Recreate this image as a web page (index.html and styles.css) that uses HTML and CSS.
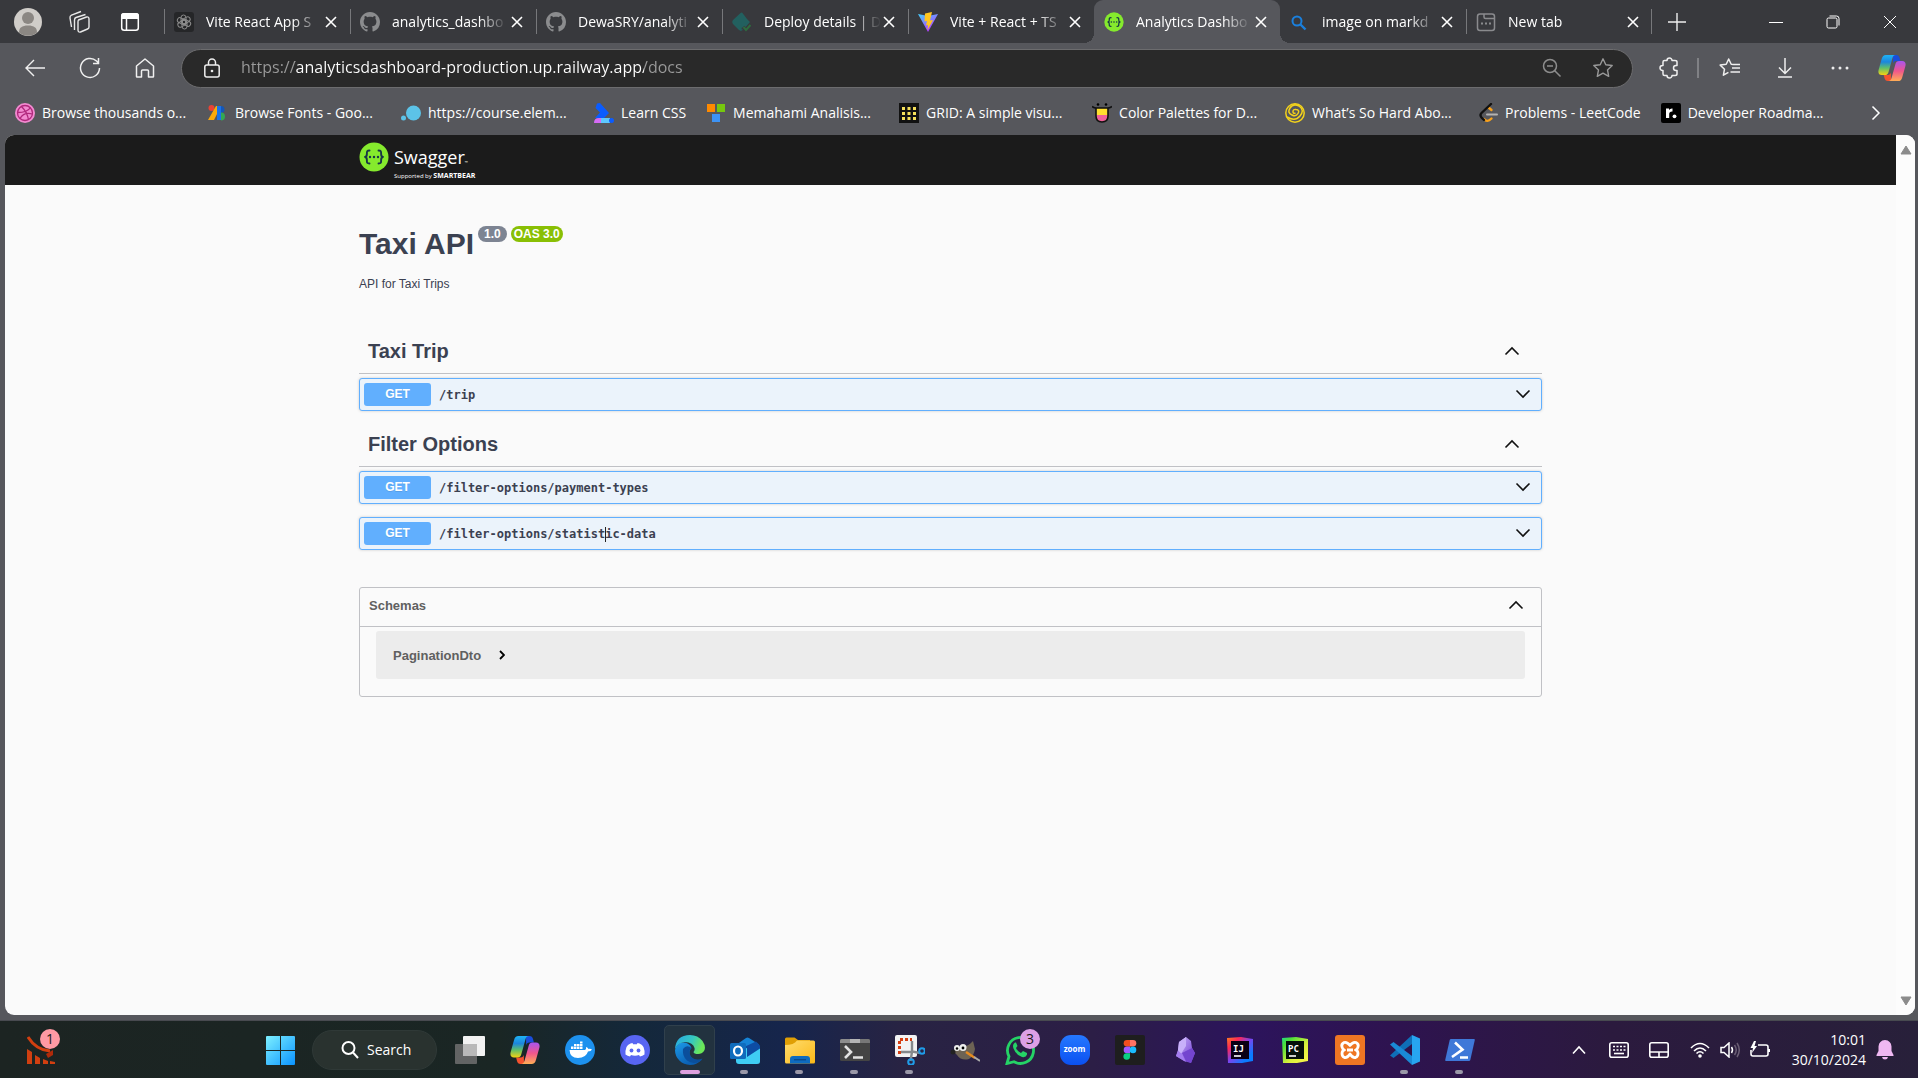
FILE: index.html
```html
<!DOCTYPE html>
<html lang="en">
<head>
<meta charset="utf-8">
<title>Analytics Dashboard</title>
<link rel="stylesheet" href="styles.css">
</head>
<body>
<svg class="defs" aria-hidden="true">
  <defs>
    <linearGradient id="cpA" x1="0" y1="0" x2="0" y2="1"><stop offset="0" stop-color="#1fb4f5"/><stop offset=".35" stop-color="#1c86dd"/><stop offset=".65" stop-color="#5fbf6a"/><stop offset="1" stop-color="#f4d312"/></linearGradient>
    <linearGradient id="cpB" x1="0" y1="0" x2="0" y2="1"><stop offset="0" stop-color="#a855f0"/><stop offset=".5" stop-color="#f0568c"/><stop offset="1" stop-color="#ffae55"/></linearGradient>
    <linearGradient id="win" x1="0" y1="0" x2="1" y2="1"><stop offset="0" stop-color="#7df0ff"/><stop offset="1" stop-color="#0a93ff"/></linearGradient>
    <linearGradient id="edgeA" x1="0" y1="0" x2="1" y2=".3"><stop offset="0" stop-color="#27a7e6"/><stop offset=".6" stop-color="#36c8c0"/><stop offset="1" stop-color="#6be858"/></linearGradient>
    <linearGradient id="edgeB" x1="0" y1="0" x2=".6" y2="1"><stop offset="0" stop-color="#1c9ae8"/><stop offset="1" stop-color="#0a5cb0"/></linearGradient>
    <linearGradient id="folder" x1="0" y1="0" x2="1" y2="1"><stop offset="0" stop-color="#ffdc6e"/><stop offset="1" stop-color="#fbb917"/></linearGradient>
    <linearGradient id="vite" x1="0" y1="0" x2=".6" y2="1"><stop offset="0" stop-color="#41d1ff"/><stop offset="1" stop-color="#bd34fe"/></linearGradient>
    <linearGradient id="zoomG" x1="0" y1="0" x2="0" y2="1"><stop offset="0" stop-color="#2578ff"/><stop offset="1" stop-color="#0b50f0"/></linearGradient>
    <linearGradient id="ijG" x1="0" y1="0" x2="1" y2="1"><stop offset="0" stop-color="#fc801d"/><stop offset=".25" stop-color="#fe2857"/><stop offset=".5" stop-color="#7a44ef"/><stop offset=".8" stop-color="#0a7cff"/></linearGradient>
    <linearGradient id="pcG" x1="0" y1="0" x2="1" y2="1"><stop offset="0" stop-color="#21d789"/><stop offset=".2" stop-color="#4be03a"/><stop offset=".6" stop-color="#d8f03c"/><stop offset="1" stop-color="#fcf84a"/></linearGradient>
    <linearGradient id="obs" x1="0" y1="0" x2="1" y2="1"><stop offset="0" stop-color="#cdb5fb"/><stop offset="1" stop-color="#6a35cf"/></linearGradient>
    <symbol id="close" viewBox="0 0 12 12"><path d="M1 1l10 10M11 1L1 11" fill="none" stroke="currentColor" stroke-width="1.6"/></symbol>
    <symbol id="up" viewBox="0 0 16 10"><path d="M1.500 8.500L8 2l6.500 6.500" fill="none" stroke="currentColor" stroke-width="1.600"/></symbol>
    <symbol id="down" viewBox="0 0 16 10"><path d="M1.500 1.500L8 8l6.500-6.500" fill="none" stroke="currentColor" stroke-width="1.600"/></symbol>
    <symbol id="github" viewBox="0 0 16 16"><path fill="#8b8c8e" d="M8 0C3.580 0 0 3.580 0 8c0 3.540 2.290 6.530 5.470 7.590.4.070.55-.17.55-.38 0-.19-.01-.82-.01-1.490-2.010.37-2.530-.49-2.690-.94-.09-.23-.48-.94-.82-1.130-.28-.15-.68-.52-.01-.53.63-.01 1.080.58 1.230.82.72 1.210 1.870.87 2.330.66.07-.52.28-.87.51-1.070-1.780-.2-3.640-.89-3.640-3.950 0-.87.31-1.590.82-2.150-.08-.2-.36-1.020.08-2.120 0 0 .67-.21 2.200.82.64-.18 1.320-.27 2-.27s1.360.09 2 .27c1.530-1.040 2.200-.82 2.200-.82.44 1.100.16 1.920.08 2.120.51.56.82 1.270.82 2.150 0 3.070-1.870 3.750-3.650 3.950.29.25.54.73.54 1.480 0 1.070-.01 1.930-.01 2.200 0 .21.15.46.55.38A8 8 0 0 0 16 8c0-4.420-3.580-8-8-8z"/></symbol>
    <symbol id="swag" viewBox="0 0 30 30"><circle cx="15" cy="15" r="14.500" fill="#85ea2d"/><g fill="none" stroke="#173647" stroke-width="1.900" stroke-linecap="round" stroke-linejoin="round"><path d="M10.500 8.500c-2.500 0-2.700 1-2.600 3 .1 2-.1 3.300-1.900 3.500 1.800.2 2 1.500 1.900 3.500-.1 2 .1 3 2.600 3M19.500 8.500c2.500 0 2.700 1 2.600 3-.1 2 .1 3.300 1.900 3.500-1.800.2-2 1.500-1.900 3.500.1 2-.1 3-2.600 3"/></g><g fill="#173647"><circle cx="11" cy="15" r="1.200"/><circle cx="15" cy="15" r="1.200"/><circle cx="19" cy="15" r="1.200"/></g></symbol>
    <symbol id="copilot" viewBox="0 0 30 30"><path d="M16 1h3.500c2 0 3 1.300 3.500 3l.9 3.500h-4.400c-2 0-2.800 1-3.300 2.700z" fill="#1a4ddb"/><path d="M14 29h-3.500c-2 0-3-1.300-3.500-3l-.9-3.500h4.400c2 0 2.800-1 3.300-2.700z" fill="#f4522f"/><path d="M8.500 1H19c-2 0-2.900 1.200-3.500 3.200l-4.200 15c-.6 2.200-1.700 3.300-4 3.300H4c-3 0-4.200-2.300-3.300-5.500L4 5.200C4.800 2.300 6 1 8.500 1z" fill="url(#cpA)"/><path d="M21.500 29H11c2 0 2.900-1.200 3.500-3.200l4.200-15c.6-2.200 1.700-3.300 4-3.300H26c3 0 4.200 2.300 3.300 5.500L26 24.800c-.8 2.900-2 4.200-4.500 4.200z" fill="url(#cpB)"/></symbol>
  </defs>
</svg>

<header class="browser">
  <div class="titlebar">
    <button class="tb-btn profile" aria-label="Profile"><svg width="28" height="28" viewBox="0 0 28 28"><circle cx="14" cy="14" r="14" fill="#d0cdc9"/><circle cx="14" cy="10" r="6" fill="#8b8783"/><path d="M5 24.500c0-5 3-7 9-7s9 2 9 7a14 14 0 0 1-18 0z" fill="#8b8783"/></svg></button>
    <button class="tb-btn" aria-label="Workspaces"><svg width="22" height="24" viewBox="0 0 22 24" fill="none" stroke="#e8e8e8" stroke-width="1.400" stroke-linejoin="round"><path d="M10.500 10l8-3q2.500-.5 2.500 2v8q0 1.500-1.500 2l-7 3q-2.500.5-2.500-2v-8q0-1.500.5-2z"/><path d="M6.500 20V10q0-2 1.500-2.500L17.500 4.500M3.500 17L2 8q-.3-2 1.500-2.800L13 1.500"/></svg></button>
    <button class="tb-btn" aria-label="Tab actions"><svg width="20" height="20" viewBox="0 0 20 20"><rect x="1.700" y="1.700" width="16.600" height="16.600" rx="2.500" fill="none" stroke="#fff" stroke-width="1.500"/><path d="M1 7V4q0-3 3-3h12q3 0 3 3v3z" fill="#fff"/><path d="M6.500 7v11" stroke="#fff" stroke-width="1.500"/></svg></button>
    <nav class="tabs" aria-label="Tabs">
      <div class="tab"><button class="tab-main"><svg viewBox="0 0 20 20"><rect width="20" height="20" rx="3" fill="#252628"/><g fill="none" stroke="#8c8c8c" stroke-width="1"><rect x="7" y="3" width="5" height="9" rx="2.500"/><rect x="7" y="3" width="5" height="9" rx="2.500" transform="rotate(60 10 10)"/><rect x="7" y="3" width="5" height="9" rx="2.500" transform="rotate(120 10 10)"/><rect x="7" y="3" width="5" height="9" rx="2.500" transform="rotate(180 10 10)"/><rect x="7" y="3" width="5" height="9" rx="2.500" transform="rotate(240 10 10)"/><rect x="7" y="3" width="5" height="9" rx="2.500" transform="rotate(300 10 10)"/></g></svg><span>Vite React App S</span></button><button class="tab-x" aria-label="Close tab"><svg><use href="#close"/></svg></button></div>
      <div class="tab"><button class="tab-main"><svg><use href="#github"/></svg><span>analytics_dashbo</span></button><button class="tab-x" aria-label="Close tab"><svg><use href="#close"/></svg></button></div>
      <div class="tab"><button class="tab-main"><svg><use href="#github"/></svg><span>DewaSRY/analyti</span></button><button class="tab-x" aria-label="Close tab"><svg><use href="#close"/></svg></button></div>
      <div class="tab"><button class="tab-main"><svg viewBox="0 0 20 20"><path d="M10 0.500l2 2.500 3 4 3 3-7 1-2 8-2-1-6-6q-1.500-2 0-4l7-6.500q1-1 2-1z" fill="#22605f"/><path d="M10 10h8l-6 7-3 2z" fill="#22605f"/><path d="M11 15l3 3.500 5-5" fill="none" stroke="#38393d" stroke-width="4"/><path d="M11.500 15l2.500 3 4.500-5" fill="none" stroke="#2e6b3e" stroke-width="2"/></svg><span>Deploy details | D</span></button><button class="tab-x" aria-label="Close tab"><svg><use href="#close"/></svg></button></div>
      <div class="tab"><button class="tab-main"><svg viewBox="0 0 20 20"><path d="M0 2l10 18L20 2l-10 2z" fill="url(#vite)"/><path d="M14 0L7 1.500 6.500 9.500l2.500-.5-1 4.500 2-.5-.5 5L15 8l-3 .5L14 0z" fill="#ffc61f"/></svg><span>Vite + React + TS</span></button><button class="tab-x" aria-label="Close tab"><svg><use href="#close"/></svg></button></div>
      <div class="tab active"><button class="tab-main"><svg><use href="#swag"/></svg><span>Analytics Dashbo</span></button><button class="tab-x" aria-label="Close tab"><svg><use href="#close"/></svg></button></div>
      <div class="tab"><button class="tab-main"><svg viewBox="0 0 20 20"><circle cx="7" cy="9" r="4.500" fill="none" stroke="#1a7fdc" stroke-width="2"/><path d="M10.500 12.500l5 5" stroke="#1a7fdc" stroke-width="2.400"/></svg><span>image on markd</span></button><button class="tab-x" aria-label="Close tab"><svg><use href="#close"/></svg></button></div>
      <div class="tab"><button class="tab-main"><svg viewBox="0 0 20 20" fill="none" stroke="#8a8b8e" stroke-width="1.500"><rect x="1.500" y="2" width="17" height="16.500" rx="2.500"/><path d="M8 2v3q0 1.500 1.500 1.500h9"/><path d="M5 11.500h2M9 11.500h2M13 11.500h2" stroke-width="2"/></svg><span>New tab</span></button><button class="tab-x" aria-label="Close tab"><svg><use href="#close"/></svg></button></div>
    </nav>
    <button class="new-tab" aria-label="New tab"><svg width="18" height="18" viewBox="0 0 18 18"><path d="M9 0v18M0 9h18" stroke="#eee" stroke-width="1.400"/></svg></button>
    <div class="win-ctl">
      <button aria-label="Minimize"><svg width="14" height="14" viewBox="0 0 14 14"><path d="M0 7.500h14" stroke="#fff"/></svg></button>
      <button aria-label="Restore"><svg width="14" height="14" viewBox="0 0 14 14" fill="none" stroke="#fff"><rect x="1" y="3" width="10" height="10" rx="1.500"/><path d="M3.500 1h7q2.500 0 2.500 2.500v7"/></svg></button>
      <button aria-label="Close"><svg width="14" height="14" viewBox="0 0 14 14"><path d="M1 1l12 12M13 1L1 13" stroke="#fff"/></svg></button>
    </div>
  </div>

  <div class="toolbar">
    <button class="nav-btn" aria-label="Back"><svg width="22" height="20" viewBox="0 0 22 20" fill="none" stroke="#f0f0f0" stroke-width="1.400"><path d="M21 10H2M10 2l-8 8 8 8"/></svg></button>
    <button class="nav-btn" aria-label="Refresh"><svg width="22" height="22" viewBox="0 0 22 22" fill="none" stroke="#f0f0f0" stroke-width="1.500"><path d="M20.500 11a9.500 9.500 0 1 1-3-7l2 2M19.500 1v5.500H14"/></svg></button>
    <button class="nav-btn" aria-label="Home"><svg width="20" height="20" viewBox="0 0 20 20" fill="none" stroke="#f0f0f0" stroke-width="1.500" stroke-linejoin="round"><path d="M1.500 8L10 1l8.500 7v10.500q0 .5-.5.500h-4.500v-6q0-1-1-1h-5q-1 0-1 1v6H2q-.5 0-.5-.5z"/></svg></button>
    <div class="omnibox">
      <svg width="16" height="20" viewBox="0 0 16 20" fill="none" stroke="#eee" stroke-width="1.500"><rect x=".8" y="7" width="14.400" height="12" rx="2"/><path d="M4.500 7V4.500a3.500 3.500 0 0 1 7 0V7"/><circle cx="8" cy="13" r=".6" fill="#eee"/></svg>
      <input class="url" type="text" aria-label="Address" value="https://analyticsdashboard-production.up.railway.app/docs">
      <button aria-label="Zoom out"><svg width="20" height="20" viewBox="0 0 20 20" fill="none" stroke="#8d8d8d" stroke-width="1.500"><circle cx="8" cy="8" r="6.500"/><path d="M12.500 12.500l6 6M5 8h6"/></svg></button>
      <button aria-label="Add to favorites"><svg width="22" height="22" viewBox="0 0 22 22" fill="none" stroke="#999" stroke-width="1.400" stroke-linejoin="round"><path d="M11 1.800l2.800 5.900 6.400.8-4.700 4.400 1.200 6.400-5.700-3.100-5.700 3.100 1.200-6.400L1.800 8.500l6.400-.8z"/></svg></button>
    </div>
    <div class="tools">
      <button class="ext" aria-label="Extensions"><svg width="20" height="22" viewBox="0 0 20 22" fill="none" stroke="#eee" stroke-width="1.500" stroke-linejoin="round"><path d="M4 5q0-1.500 1.500-1.500H8a2.500 2.500 0 0 1 5 0h3q2 0 2 1.500v3.500h-1a2.500 2.500 0 0 0 0 5h1V17q0 1.500-2 1.500h-3a2.500 2.500 0 0 1-5 0H5.500Q4 18.500 4 17v-3.500H3.500a2.500 2.500 0 0 1 0-5H4z"/></svg></button>
      <i class="bar"></i>
      <button aria-label="Favorites"><svg width="22" height="20" viewBox="0 0 22 20" fill="none" stroke="#eee" stroke-width="1.500" stroke-linejoin="round"><path d="M14.500 6.500l-2.300-.3L9.700 1 7.200 6.300l-6 .8 4.300 4.100-1.100 6 5-2.800M13 10h8M14 6.500h7M11.500 14h9.500"/></svg></button>
      <button aria-label="Downloads"><svg width="16" height="20" viewBox="0 0 16 20" fill="none" stroke="#eee" stroke-width="1.500"><path d="M8 0v15M2 9.500L8 15.500l6-6M1 19h14"/></svg></button>
      <button aria-label="Settings and more"><svg width="18" height="4" viewBox="0 0 18 4" fill="#eee"><circle cx="2" cy="2" r="1.500"/><circle cx="9" cy="2" r="1.500"/><circle cx="16" cy="2" r="1.500"/></svg></button>
      <button class="ext" aria-label="Copilot"><svg width="28" height="28"><use href="#copilot"/></svg></button>
    </div>
  </div>

  <nav class="bookmarks" aria-label="Favorites bar">
    <a href="#" class="long"><svg viewBox="0 0 20 20"><circle cx="10" cy="10" r="10" fill="#f28ad0"/><g fill="none" stroke="#b0287c" stroke-width="1.300"><circle cx="10" cy="10" r="7.500"/><path d="M6.500 3.500q6 6 7 13.500M2.500 9.500q10 0 13-5M5 15.500q4-7 12.500-4.500"/></g></svg><span>Browse thousands o...</span></a>
    <a href="#" class="long"><svg viewBox="0 0 20 20"><circle cx="3.500" cy="5" r="3" fill="#ea4335"/><path d="M8 3h5L6 17H0z" fill="#fbaa0a"/><path d="M9 3h4v14H9z" fill="#1a73e8"/><path d="M13 3a3.500 3.500 0 0 1 0 7z" fill="#1557b8"/><path d="M13 9.500a4 4 0 0 1 0 8z" fill="#34a853"/></svg><span>Browse Fonts - Goo...</span></a>
    <a href="#" class="long"><svg viewBox="0 0 20 20" fill="#5cc3e8"><circle cx="12.500" cy="10" r="7.500"/><circle cx="2.500" cy="15" r="2.500"/></svg><span>https://course.elem...</span></a>
    <a href="#"><svg viewBox="0 0 20 20"><path d="M3 .5l3-.5 9 10-5 5H1l5-5.500L1.500 5z" fill="#0a5cff"/><path d="M0 20q0-5 5-5h3v5z" fill="#d56bf5"/><path d="M7 15h9v5H7z" fill="#5dc8ff"/><circle cx="17.500" cy="17.500" r="2.500" fill="#0a5cff"/></svg><span>Learn CSS</span></a>
    <a href="#" class="long"><svg viewBox="0 0 20 20"><path d="M1 1h8v8H1z" fill="#ff8a00"/><path d="M11 1h8v8h-8z" fill="#76c80e"/><path d="M6 11h8v8H6z" fill="#3d93f5"/></svg><span>Memahami Analisis...</span></a>
    <a href="#" class="long"><svg viewBox="0 0 20 20"><path d="M0 0h20v20H0z" fill="#111"/><path d="M3 4h3v3H3zM8.500 4h3v3h-3zM14 4h3v3h-3zM3 9h3v3H3zM8.500 9h3v3h-3zM14 9h3v3h-3zM3 14h3v3H3zM8.500 14h3v3h-3zM14 14h3v3h-3z" fill="#f5e05a"/></svg><span>GRID: A simple visu...</span></a>
    <a href="#" class="long"><svg viewBox="0 0 20 20"><circle cx="6" cy="1.500" r="1.300"/><circle cx="14" cy="1.500" r="1.300"/><path d="M4 5h12v8q0 6-6 6t-6-6z" fill="#ffdf2e"/><path d="M4.500 12h11q0 7-5.500 7t-5.500-7z" fill="#f0609a"/><path d="M0 3.500q2 1.500 4 1.500h12q2 0 4-1.500M4 5v8q0 6 6 6t6-6V5" fill="none" stroke="#111" stroke-width="1.600"/></svg><span>Color Palettes for D...</span></a>
    <a href="#" class="long"><svg viewBox="0 0 20 20" fill="none" stroke="#f2d21c" stroke-width="1.500"><circle cx="10" cy="10" r="9.200"/><path d="M2 14q8 5 13-1t-1-10q-6-3-9 2t2 7q4 2 6-1.500T11 6.500q-3-.5-3 2t2.500 1.500"/></svg><span>What’s So Hard Abo...</span></a>
    <a href="#"><svg viewBox="0 0 20 20" fill="none" stroke-width="2.400" stroke-linecap="round"><path d="M13.500 7l-3-2.500M6 16q3 4 7.500-.5" stroke="#f9a11b"/><path d="M13 1L3.500 10q-2 2 0 4.500L6 17" stroke="#111"/><path d="M9 11.500h10" stroke="#b3b3b3" stroke-width="2"/></svg><span>Problems - LeetCode</span></a>
    <a href="#" class="long"><svg viewBox="0 0 20 20"><rect width="20" height="20" rx="2" fill="#000"/><path d="M5 15V5.500h3V7q1-1.700 3.500-1.500v3Q8.200 8.300 8.200 11v4z" fill="#fff"/><circle cx="13.500" cy="13.300" r="1.900" fill="#fff"/></svg><span>Developer Roadma...</span></a>
    <button class="more" aria-label="More favorites"><svg width="10" height="16" viewBox="0 0 10 16"><path d="M1.500 1.500L8 8l-6.500 6.500" fill="none" stroke="#fff" stroke-width="1.500"/></svg></button>
  </nav>
</header>

<div class="viewport">
  <main class="page">
    <div class="swagger-bar">
      <div class="wrap">
        <a href="#" class="logo"><svg width="30" height="30"><use href="#swag"/></svg><span class="logo-text"><span class="logo-name">Swagger<small>™</small></span><span class="logo-by">Supported by <b>SMARTBEAR</b></span></span></a>
      </div>
    </div>
    <div class="wrap">
      <section class="info">
        <h1>Taxi API</h1>
        <span class="pill version">1.0</span>
        <span class="pill oas">OAS 3.0</span>
      </section>
      <p class="desc">API for Taxi Trips</p>

      <section class="group">
        <h2><button>Taxi Trip<svg><use href="#up"/></svg></button></h2>
        <button class="op"><b class="verb">GET</b><code>/trip</code><svg><use href="#down"/></svg></button>
      </section>
      <section class="group">
        <h2><button>Filter Options<svg><use href="#up"/></svg></button></h2>
        <button class="op"><b class="verb">GET</b><code>/filter-options/payment-types</code><svg><use href="#down"/></svg></button>
        <button class="op"><b class="verb">GET</b><code>/filter-options/statist<i class="cursor"></i>ic-data</code><svg><use href="#down"/></svg></button>
      </section>

      <section class="schemas">
        <h3><button>Schemas<svg><use href="#up"/></svg></button></h3>
        <div class="models">
          <button class="model">PaginationDto<svg width="6" height="10" viewBox="0 0 6 10"><path d="M1 1l4 4-4 4" fill="none" stroke="#000" stroke-width="1.800"/></svg></button>
        </div>
      </section>
    </div>
  </main>
  <div class="scroll" aria-hidden="true">
    <svg width="12" height="10" viewBox="0 0 12 10"><path d="M6 1l5 8H1z" fill="#8b8b8b" stroke="#8b8b8b" stroke-linejoin="round"/></svg>
    <svg width="12" height="10" viewBox="0 0 12 10"><path d="M6 9l5-8H1z" fill="#8b8b8b" stroke="#8b8b8b" stroke-linejoin="round"/></svg>
  </div>
</div>

<footer class="taskbar">
  <button class="widget" aria-label="Widgets"><svg width="28" height="28" viewBox="0 0 28 28" fill="#d13f10"><path d="M0 13l5 3v12H0zM8 19l5 3v6H8zM16 23l5 2v3h-5zM23 25l5 1v2h-5z"/><path d="M1 1q8 13 22 14" fill="none" stroke="#d13f10" stroke-width="3"/><path d="M19 18l7-4v5l-5 3z" fill="#b02a0a"/></svg><span class="badge alert">1</span></button>
  <nav class="apps" aria-label="Taskbar">
    <button class="app" aria-label="Start"><svg viewBox="0 0 30 30" fill="url(#win)"><path d="M1 2q0-1 1-1h13v14H1zM16 1h13q1 0 1 1v13H16zM1 16h14v14H2q-1 0-1-1zM16 16h14v13q0 1-1 1H16z"/></svg></button>
    <button class="search"><svg width="18" height="18" viewBox="0 0 18 18" fill="none" stroke="#fff" stroke-width="2"><circle cx="7.500" cy="7" r="6"/><path d="M12 11.500l5 5.500"/></svg>Search</button>
    <button class="app" aria-label="Task view"><svg viewBox="0 0 30 30"><rect x="8" y="1" width="22" height="20" rx="1" fill="#f2f2f2"/><rect y="9" width="22" height="20" rx="1" fill="#707070" opacity=".85"/><path d="M8 9h14v12H8z" fill="#b9b9b9"/></svg></button>
    <button class="app" aria-label="Copilot"><svg><use href="#copilot"/></svg></button>
    <button class="app" aria-label="Docker"><svg viewBox="0 0 30 30"><circle cx="15" cy="15" r="15" fill="#1d91ee"/><path d="M4.500 15H20q1.500-.5 1-3 2 .5 2.500 2 2-.5 3.500.5-1 2-4 2-2 6.500-10 6.500Q5 23 4.500 15z" fill="#fff"/><path d="M6 11.500h2.500V14H6zM9 11.500h2.500V14H9zM12 11.500h2.500V14H12zM15 11.500h2.500V14H15zM9 9h2.500v2H9zM12 9h2.500v2H12zM15 9h2.500v2H15zM15 6.500h2.500v2H15z" fill="#fff"/></svg></button>
    <button class="app" aria-label="Discord"><svg viewBox="0 0 30 30"><circle cx="15" cy="15" r="15" fill="#5865f2"/><path d="M10.500 8.500L12.500 8l.6 1.200h3.800l.6-1.200 2 .5q3 1 4 3.500 1.500 4 1 7.500-2 1.500-4.500 2L19 20q-4 1.500-8 0l-1 1.500q-2.500-.5-4.500-2-.5-3.500 1-7.500 1-2.500 4-3.500z" fill="#fff"/><ellipse cx="11.500" cy="15.500" rx="1.900" ry="2.100" fill="#5865f2"/><ellipse cx="18.500" cy="15.500" rx="1.900" ry="2.100" fill="#5865f2"/></svg></button>
    <button class="app current" aria-label="Microsoft Edge"><svg viewBox="0 0 30 30"><path d="M0 15A15 15 0 0 0 15 30q7 0 11-5-5 1.500-9-1.500-3-3-2.500-7 .3-2 2-3.500-2-5.500-8.500-5.500Q2 7.500 0 15z" fill="url(#edgeB)"/><path d="M8 14q-1 7 4 11.500 5 4 12 1.500 2.500-1.500 3.500-3.500-4 1.500-8 .5-5-2-5-7 0-2.500 2-4-5-4-8.500 1z" fill="#0b4f9c"/><path d="M0 14Q1 0 15 0q8 0 12.500 6 4 6 1.500 10-2 3-6 3-4 0-4.500-2 1.500-1.500 1-4Q18 7.500 10 7 3 7.500 0 14z" fill="url(#edgeA)"/></svg></button>
    <button class="app open" aria-label="Outlook"><svg viewBox="0 0 30 30"><path d="M6 10l10-7q1.500-.8 3 0l10 6.500-4 5-14 3z" fill="#1583d6"/><path d="M14 12L26 6.500l4 4V14l-13 9-8-4z" fill="#0d4ca3"/><path d="M6 17l11-4v9l13-8.500v13q0 2.500-3 2.500H9q-3 0-3-3z" fill="#3fcdf4"/><rect y="8" width="16" height="16" rx="1.500" fill="#0f6cbd"/><ellipse cx="8" cy="16" rx="4" ry="4.500" fill="none" stroke="#fff" stroke-width="2.200"/></svg></button>
    <button class="app open" aria-label="File Explorer"><svg viewBox="0 0 30 30"><path d="M0 4q0-1.500 1.500-1.500h8L13 5h12v6H0z" fill="#e09f05"/><path d="M0 10q9 0 12-4.500h16.500Q30 5.500 30 7v20q0 1.500-1.500 1.500h-27Q0 28.500 0 27z" fill="url(#folder)"/><path d="M5 28.500V24q0-3 3-3h14q3 0 3 3v4.500z" fill="#0e6cbf"/><path d="M9 24.800h12" stroke="#083e78"/></svg></button>
    <button class="app open" aria-label="Terminal"><svg viewBox="0 0 30 30"><rect y="4" width="30" height="22" rx="1.500" fill="#444"/><path d="M0 8V5.500Q0 4 1.500 4H10v4z" fill="#8d8d8d"/><path d="M10 4h10v4H10z" fill="#b5b5b5"/><path d="M20 4h8.500Q30 4 30 5.500V8H20z" fill="#777"/><path d="M5 11l6 6-6 6M13 22.500h10" fill="none" stroke="#e2e2e2" stroke-width="2.600"/></svg></button>
    <button class="app open" aria-label="Snipping Tool"><svg viewBox="0 0 30 30"><rect width="22" height="22" rx="2" fill="#f3f3f3"/><path d="M4.500 19V4.500H17" fill="none" stroke="#d63f12" stroke-width="3" stroke-dasharray="3 2"/><path d="M17 6v10.500l8 1.500M6 17h11l-1.500 9" fill="none" stroke="#85898c" stroke-width="2.400"/><circle cx="27" cy="16" r="2.800" fill="none" stroke="#1f9ce8" stroke-width="2"/><circle cx="16" cy="27" r="2.800" fill="none" stroke="#1f9ce8" stroke-width="2"/></svg></button>
    <button class="app" aria-label="GIMP"><svg viewBox="0 0 30 30"><path d="M3 16q2-3 7-4 8 0 13-6l2 8q-1 7-6 10-8 2-12-4z" fill="#6d6354"/><circle cx="3" cy="17" r="2.500" fill="#222"/><circle cx="7" cy="13" r="3" fill="#eee"/><circle cx="13" cy="12.500" r="3.500" fill="#eee"/><circle cx="7" cy="13.500" r="1.200"/><circle cx="13" cy="13" r="1.400"/><path d="M16 17l9 6" stroke="#e58a1f" stroke-width="2.400"/><path d="M24 22l6 4" stroke="#aaa" stroke-width="2"/></svg></button>
    <button class="app" aria-label="WhatsApp"><svg viewBox="0 0 30 30"><path d="M2 28.500l2-7A13 13 0 1 1 9 26.700z" fill="none" stroke="#25d366" stroke-width="2.800"/><path d="M10 7.500q-3 2-1.500 6 2.500 6.500 8.500 8.500 4 .8 5-2.500v-1.500l-4-2-2 2q-3.500-1.500-5-5l1.500-2L11 7.500z" fill="#25d366"/></svg><span class="badge">3</span></button>
    <button class="app" aria-label="Zoom"><svg viewBox="0 0 30 30"><rect width="30" height="30" rx="11" fill="url(#zoomG)"/></svg><span class="zoom-name">zoom</span></button>
    <button class="app" aria-label="Figma"><svg viewBox="0 0 30 30"><rect width="30" height="30" rx="2" fill="#1e1e1e"/><path d="M15 5h-3a3.300 3.300 0 0 0 0 6.600h3z" fill="#f24e1e"/><path d="M15 5h3a3.300 3.300 0 0 1 0 6.600h-3z" fill="#ff7262"/><path d="M15 11.600h-3a3.300 3.300 0 0 0 0 6.600h3z" fill="#a259ff"/><circle cx="18" cy="14.900" r="3.300" fill="#1abcfe"/><path d="M15 18.200h-3a3.300 3.300 0 1 0 3 3.300z" fill="#0acf83"/></svg></button>
    <button class="app" aria-label="Obsidian"><svg viewBox="0 0 30 30"><path d="M16 2l5 4 1 7 3 5-4 10-7-2-8-5 2-6 1-8z" fill="url(#obs)"/><path d="M16 2l-7 5-1 8 3 4 5-8z" fill="#c8b0fa"/><path d="M22 13l3 5-4 10-5-2-4-8z" fill="#7445cf"/><path d="M6 21l2-5 4 3 4 8z" fill="#a47cf0"/></svg></button>
    <button class="app" aria-label="IntelliJ IDEA"><svg viewBox="0 0 30 30"><path d="M2 3l14-1 12 2v22l-11 2H3z" fill="url(#ijG)"/><path d="M6 6h18v18H6z" fill="#0a0014"/><path d="M9 21h7" stroke="#fff" stroke-width="1.600"/></svg><span class="ide">IJ</span></button>
    <button class="app" aria-label="PyCharm"><svg viewBox="0 0 30 30"><path d="M2 3l14-1 12 2v22l-11 2H3z" fill="url(#pcG)"/><path d="M6 6h18v18H6z" fill="#04100a"/><path d="M9 21h7" stroke="#fff" stroke-width="1.600"/></svg><span class="ide">PC</span></button>
    <button class="app" aria-label="XAMPP"><svg viewBox="0 0 30 30"><rect width="30" height="30" rx="3" fill="#ee7623"/><path d="M9 7.500q3-1 6 3 3-4 6-3 3 1.500 2 4.500-.5 2.500-2.500 3 2.500.5 2.500 3.500t-2.500 4q-3 .5-5.500-3.500-2.500 4-5.500 3.500Q7 21.500 7 18.500t2.500-3.500Q7.500 14.500 7 12q-1-3 2-4.500zM12 15h6" fill="none" stroke="#fff" stroke-width="2.800" stroke-linejoin="round"/></svg></button>
    <button class="app open" aria-label="Visual Studio Code"><svg viewBox="0 0 30 30"><path d="M22 0l8 3.500v23L22 30z" fill="#27a5f0"/><path d="M22 0v9L3.500 23 0 20.500z" fill="#0f6fb8"/><path d="M22 30v-9L3.500 7 0 9.500z" fill="#1a8ad6"/></svg></button>
    <button class="app open" aria-label="PowerShell"><svg viewBox="0 0 30 30"><path d="M6 4h23q1 0 .8 1l-4.500 20q-.3 1-1.300 1H1q-1 0-.8-1L4.700 5Q5 4 6 4z" fill="#3f78d8"/><path d="M10 7.500l7.500 7L7 22M15 22.500h8" fill="none" stroke="#fff" stroke-width="2.600"/></svg></button>
  </nav>
  <div class="tray">
    <button aria-label="Show hidden icons"><svg width="14" height="10" viewBox="0 0 14 10"><path d="M1 8.500L7 2l6 6.500" fill="none" stroke="#fff" stroke-width="1.600"/></svg></button>
    <button aria-label="Touch keyboard"><svg width="20" height="16" viewBox="0 0 20 16" fill="none" stroke="#fff" stroke-width="1.600"><rect x=".8" y=".8" width="18.400" height="14.400" rx="2"/><path d="M4 4.500h13M4 8h13" stroke-dasharray="2 1.500"/><path d="M5 11.500h10"/></svg></button>
    <button aria-label="Touchpad"><svg width="20" height="16" viewBox="0 0 20 16" fill="none" stroke="#fff" stroke-width="1.600"><rect x=".8" y=".8" width="18.400" height="14.400" rx="2"/><path d="M1 10h18M10 10v5"/></svg></button>
    <button class="status" aria-label="Network, volume and battery">
      <svg width="20" height="16" viewBox="0 0 20 16" fill="none" stroke="#fff" stroke-width="1.600"><path d="M1 6q9-9 18 0M4 9q6-6 12 0M6.500 11.500q3.500-3.500 7 0"/><circle cx="10" cy="14" r="1" fill="#fff"/></svg>
      <svg width="20" height="16" viewBox="0 0 20 16" fill="none" stroke="#fff" stroke-width="1.500"><path d="M1 5.500h3L9 1v14l-5-4.500H1z"/><path d="M11.500 5q2 3 0 6"/><path d="M14.500 3q3.500 5 0 10M17 1q4.500 7 0 14" stroke="#6b5e75"/></svg>
      <svg width="20" height="18" viewBox="0 0 20 18" fill="none" stroke="#fff" stroke-width="1.600"><path d="M8 4h8q2 0 2 2v7q0 2-2 2H3q-2 0-2-2V9"/><path d="M19 8v3" stroke-width="2"/><path d="M4 0L0.500 7H3l-1 5 5-7H4.500L6 0z" fill="#fff" stroke="none"/></svg>
    </button>
    <button class="clock"><span>10:01</span><span>30/10/2024</span></button>
    <button aria-label="Notifications"><svg width="18" height="20" viewBox="0 0 18 20" fill="#f0b8f2"><path d="M9 0q6 .5 6.500 6.500V11l2 4v1H.5v-1l2-4V6.500Q3 .5 9 0zM6 17h6q-.5 2.500-3 2.500T6 17z"/></svg></button>
  </div>
</footer>
</body>
</html>
```
FILE: styles.css
```css
* { box-sizing: border-box; }

body {
  margin: 0;
  min-height: 100vh;
  display: flex;
  flex-direction: column;
  background: #56575c;
  font-family: "Open Sans", sans-serif;
  font-size: 14px;
  color: #fff;
}

button {
  margin: 0;
  padding: 0;
  border: 0;
  background: none;
  color: inherit;
  font: inherit;
  text-align: left;
}

a { color: inherit; text-decoration: none; }
svg { display: block; flex: none; }
.defs { position: absolute; width: 0; height: 0; }

/* title bar */
.titlebar {
  display: flex;
  align-items: center;
  height: 43px;
  padding-left: 2px;
  background: #38393d;
}

.tb-btn {
  display: flex;
  justify-content: center;
  align-items: center;
  width: 51px;
  height: 43px;
}

.tabs {
  display: flex;
  flex: 0 1 1488px;
  min-width: 0;
  height: 43px;
  margin-left: 9px;
}

.tab {
  position: relative;
  display: flex;
  align-items: center;
  flex: 1 1 0;
  min-width: 0;
  padding: 0 9px 0 10px;
}

.tab::before,
.tab:last-child::after {
  content: "";
  position: absolute;
  left: 0;
  top: 9px;
  bottom: 9px;
  border-left: 1px solid #77787b;
}

.tab:last-child::after { left: auto; right: 0; }

.tab-main {
  display: flex;
  align-items: center;
  gap: 12px;
  flex: 1;
  min-width: 0;
}

.tab-main svg { width: 20px; height: 20px; }

.tab-main span {
  flex: 1;
  white-space: nowrap;
  -webkit-mask-image: linear-gradient(to left, transparent, #000 28px);
  mask-image: linear-gradient(to left, transparent, #000 28px);
}

.tab-x { padding: 4px; }
.tab-x svg { width: 12px; height: 12px; }

.tab.active {
  background: #56575c;
  border-radius: 9px 9px 0 0;
}

.tab.active::before,
.tab.active::after {
  content: "";
  position: absolute;
  top: auto;
  bottom: 0;
  width: 10px;
  height: 10px;
  border: 0;
}

.tab.active::before { left: -10px; background: radial-gradient(circle at 0 0, transparent 10px, #56575c 10px); }
.tab.active::after { right: -10px; background: radial-gradient(circle at 100% 0, transparent 10px, #56575c 10px); }
.tab.active + .tab::before { display: none; }

.new-tab { padding: 8px; margin-left: 8px; }

.win-ctl { display: flex; margin-left: auto; }

.win-ctl button {
  display: flex;
  justify-content: center;
  align-items: center;
  width: 57px;
  height: 43px;
}

/* address row */
.toolbar {
  display: flex;
  align-items: center;
  height: 50px;
  padding-left: 7px;
}

.nav-btn {
  display: flex;
  justify-content: center;
  align-items: center;
  width: 55px;
  height: 40px;
}

.omnibox {
  display: flex;
  align-items: center;
  flex: 1;
  height: 39px;
  margin-left: 9px;
  padding: 0 18px 0 22px;
  border: 1px solid #6c6c6e;
  border-radius: 20px;
  background: #292929;
}

.url {
  flex: 1;
  min-width: 0;
  height: 30px;
  margin: 0 0 0 21px;
  padding: 0 0 2px;
  border: 0;
  outline: 0;
  font: 16px "Open Sans", sans-serif;
  color: transparent;
  background: linear-gradient(to right, #9b9b9b 54px, #fff 54px 403px, #9b9b9b 403px);
  -webkit-background-clip: text;
  background-clip: text;
}

.omnibox button { margin-left: 30px; }

.tools { display: flex; align-items: center; width: 285px; padding-left: 11px; }

.tools button {
  display: flex;
  justify-content: center;
  align-items: center;
  width: 55px;
  height: 40px;
}

.tools .ext { width: 50px; }
.bar { width: 2px; height: 20px; margin: 0 3px; background: #808185; }

/* favorites bar */
.bookmarks {
  display: flex;
  align-items: center;
  gap: 20px;
  height: 42px;
  padding: 0 37px 3px 15px;
}

.bookmarks a {
  display: flex;
  align-items: center;
  gap: 7px;
  min-width: 0;
  white-space: nowrap;
}

.bookmarks a svg { width: 20px; height: 20px; }
.bookmarks .long { flex: 0 1 173px; }
.more { margin-left: auto; }

/* viewport */
.viewport {
  display: flex;
  flex: 1;
  margin: 0 3px 5px 5px;
  border-radius: 9px;
  overflow: hidden;
  background: #fafafa;
}

.page {
  flex: 1;
  min-width: 0;
  font-family: "Liberation Sans", Arial, sans-serif;
  color: #3b4151;
}

.scroll {
  display: flex;
  flex-direction: column;
  justify-content: space-between;
  align-items: center;
  width: 19px;
  padding: 10px 0 9px;
  background: #fcfcfc;
}

.wrap { max-width: 1183px; margin: 0 auto; }

.swagger-bar {
  height: 50px;
  padding-top: 7px;
  background: #1b1b1b;
}

.logo { display: flex; gap: 5px; color: #fff; font-family: "Open Sans", sans-serif; }
.logo-text { display: flex; flex-direction: column; padding-top: 6px; }
.logo-name { font-size: 18px; line-height: 18px; }
.logo-name small { font-size: 4px; }
.logo-by { font-size: 6px; line-height: 8px; }
.logo-by b { font-size: 7px; }

.info { display: flex; align-items: flex-start; gap: 4px; padding-top: 41px; }

h1 {
  margin: 0;
  font-size: 30px;
  line-height: 35px;
}

.pill {
  padding: 0 6px;
  border-radius: 8px;
  font-size: 12px;
  line-height: 16px;
  font-weight: bold;
  color: #fff;
}

.version { background: #7d8492; }
.oas { padding: 0 3px; background: #89bf04; }

.desc {
  margin: 15px 0 38px;
  font-size: 12px;
  line-height: 17px;
}

h2, h3 { margin: 0; }

h2 button {
  display: flex;
  justify-content: space-between;
  align-items: center;
  width: 100%;
  height: 43px;
  padding: 0 22px 2px 9px;
  border-bottom: 1px solid #c0c1c5;
  font-size: 20px;
}

h2 svg, h3 svg, .op svg { width: 16px; height: 10px; color: #111; }

.op {
  display: flex;
  align-items: center;
  width: 100%;
  height: 33px;
  margin: 4px 0 13px;
  padding: 0 10px 0 4px;
  border: 1px solid #61affe;
  border-radius: 3px;
  background: #ebf3fb;
  box-shadow: 0 0 3px rgba(0, 0, 0, .19);
}

.op svg { margin-bottom: 2px; }
.op + .op { margin-top: 0; }

.verb {
  width: 67px;
  border-radius: 3px;
  background: #61affe;
  color: #fff;
  font-size: 12px;
  line-height: 23px;
  text-align: center;
  text-shadow: 0 1px 0 rgba(0, 0, 0, .1);
}

.op code {
  flex: 1;
  padding-left: 8px;
  font: bold 12px "DejaVu Sans Mono", monospace;
}

.cursor { position: relative; }

.cursor::before {
  content: "";
  position: absolute;
  left: 0;
  top: 0;
  height: 15px;
  border-left: 1px solid #222;
}

.schemas {
  margin-top: 37px;
  border: 1px solid #c0c1c5;
  border-radius: 3px;
  color: #606060;
}

.schemas button { font-size: 13px; font-weight: bold; }

h3 button {
  display: flex;
  justify-content: space-between;
  align-items: center;
  width: 100%;
  height: 39px;
  padding: 0 17px 4px 9px;
  border-bottom: 1px solid #c0c1c5;
}

.models { padding: 4px 16px 17px; }

.model {
  display: flex;
  align-items: center;
  gap: 18px;
  width: 100%;
  height: 48px;
  padding-left: 17px;
  border-radius: 3px;
  background: #ececec;
}

/* taskbar */
.taskbar {
  display: flex;
  align-items: center;
  height: 58px;
  border-top: 1px solid #484a50;
  background: linear-gradient(to right, #1c2422 0, #1a2624 26%, #14283a 33%, #16254c 41%, #282343 47%, #2c1e46 57%, #2c145c 65%, #2e134f 73%, #2b1a3e 84%, #28203a 100%);
}

.widget { position: relative; margin: 0 197px 0 27px; }
.widget .badge { left: 13px; top: -7px; }

.apps { display: flex; align-items: center; }

.app {
  position: relative;
  display: flex;
  justify-content: center;
  align-items: center;
  width: 55px;
  height: 50px;
}

.app > svg { width: 30px; height: 30px; }

.open::after,
.current::after {
  content: "";
  position: absolute;
  bottom: 1px;
  left: 23px;
  width: 8px;
  height: 4px;
  border-radius: 2px;
  background: #9a98a8;
}

.current {
  width: 51px;
  margin: 0 2px;
  border: 1px solid #30404c;
  border-radius: 5px;
  background: #22323f;
}

.current::after { left: 15px; bottom: 0; width: 20px; background: #dda0e0; }

.search {
  display: flex;
  align-items: center;
  gap: 8px;
  width: 125px;
  height: 40px;
  margin: 0 5px;
  padding-left: 28px;
  border: 1px solid #2f3937;
  border-radius: 20px;
  background: #29322f;
}

.badge {
  position: absolute;
  left: 28px;
  top: 4px;
  width: 20px;
  height: 20px;
  border-radius: 50%;
  background: #dda0e5;
  color: #1a1a1a;
  line-height: 20px;
  text-align: center;
}

.alert { background: #ff99a4; }

.zoom-name, .ide { position: absolute; font-weight: bold; line-height: 12px; }
.zoom-name { left: 0; right: 0; top: 18px; font-size: 8px; text-align: center; }
.ide { left: 21px; top: 18px; font-family: "DejaVu Sans Mono", monospace; font-size: 9px; }

.tray { display: flex; align-items: center; margin-left: auto; padding-right: 14px; }

.tray button {
  display: flex;
  justify-content: center;
  align-items: center;
  width: 40px;
  height: 40px;
}

.tray .status { gap: 10px; width: 92px; margin-left: 5px; }

.tray .clock {
  flex-direction: column;
  align-items: flex-end;
  width: 90px;
  line-height: 20px;
}

.tray .clock + button { width: 38px; }
```
